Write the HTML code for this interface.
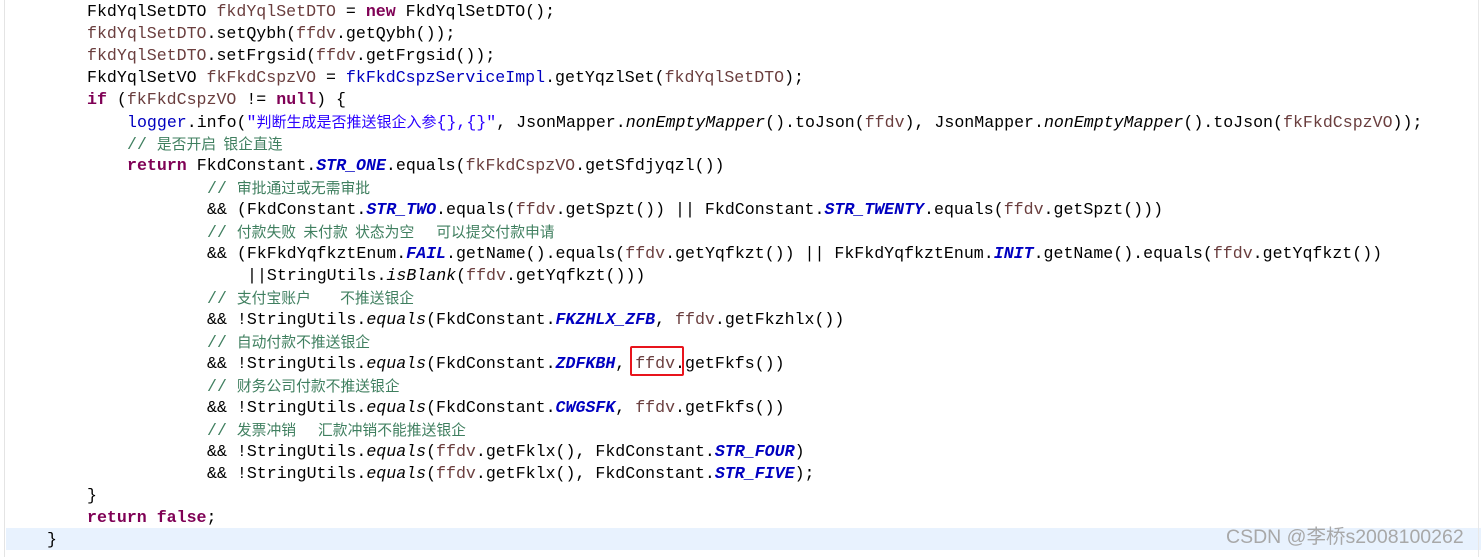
<!DOCTYPE html>
<html><head><meta charset="utf-8"><style>
html,body{margin:0;padding:0;background:#fff;width:1481px;height:557px;overflow:hidden;position:relative}
.l{position:absolute;height:22px;line-height:22px;white-space:pre;font-family:"Liberation Mono","Noto Sans CJK SC",monospace;font-size:16.6px;color:#000;letter-spacing:0}
.k{color:#7f0055;font-weight:bold}
.v{color:#6a3e3e}
.f{color:#0000c0;font-weight:bold;font-style:italic}
.s{color:#2a00ff}
.c{color:#3f7f5f}
.i{font-style:italic}
.cj{font-family:"Noto Sans CJK SC",sans-serif;font-size:14.8px;word-spacing:4px}
.sj{font-family:"Noto Sans CJK SC",sans-serif;font-size:15px}
</style></head><body>
<div style="position:absolute;left:4px;top:0;width:1px;height:557px;background:#e4e4e4"></div>
<div style="position:absolute;left:6px;top:528px;width:1475px;height:22px;background:#e8f2fe"></div>
<div style="position:absolute;left:1478px;top:0;width:1px;height:557px;background:#e8e8e8"></div>

<div class="l" style="left:87px;top:1px">FkdYqlSetDTO <span class="v">fkdYqlSetDTO</span> = <span class="k">new</span> FkdYqlSetDTO();</div>
<div class="l" style="left:87px;top:23px"><span class="v">fkdYqlSetDTO</span>.setQybh(<span class="v">ffdv</span>.getQybh());</div>
<div class="l" style="left:87px;top:45px"><span class="v">fkdYqlSetDTO</span>.setFrgsid(<span class="v">ffdv</span>.getFrgsid());</div>
<div class="l" style="left:87px;top:67px">FkdYqlSetVO <span class="v">fkFkdCspzVO</span> = <span style="color:#0000c0">fkFkdCspzServiceImpl</span>.getYqzlSet(<span class="v">fkdYqlSetDTO</span>);</div>
<div class="l" style="left:87px;top:89px"><span class="k">if</span> (<span class="v">fkFkdCspzVO</span> != <span class="k">null</span>) {</div>
<div class="l" style="left:127px;top:111px"><span style="color:#0000c0">logger</span>.info(<span class="s">"<span class="sj">判断生成是否推送银企入参</span>{},{}"</span>, JsonMapper.<span class="i">nonEmptyMapper</span>().toJson(<span class="v">ffdv</span>), JsonMapper.<span class="i">nonEmptyMapper</span>().toJson(<span class="v">fkFkdCspzVO</span>));</div>
<div class="l c" style="left:127px;top:133px">// <span class="cj">是否开启 银企直连</span></div>
<div class="l" style="left:127px;top:155px"><span class="k">return</span> FkdConstant.<span class="f">STR_ONE</span>.equals(<span class="v">fkFkdCspzVO</span>.getSfdjyqzl())</div>
<div class="l c" style="left:207px;top:177px">// <span class="cj">审批通过或无需审批</span></div>
<div class="l" style="left:207px;top:199px">&amp;&amp; (FkdConstant.<span class="f">STR_TWO</span>.equals(<span class="v">ffdv</span>.getSpzt()) || FkdConstant.<span class="f">STR_TWENTY</span>.equals(<span class="v">ffdv</span>.getSpzt()))</div>
<div class="l c" style="left:207px;top:221px">// <span class="cj">付款失败 未付款 状态为空   可以提交付款申请</span></div>
<div class="l" style="left:207px;top:243px">&amp;&amp; (FkFkdYqfkztEnum.<span class="f">FAIL</span>.getName().equals(<span class="v">ffdv</span>.getYqfkzt()) || FkFkdYqfkztEnum.<span class="f">INIT</span>.getName().equals(<span class="v">ffdv</span>.getYqfkzt())</div>
<div class="l" style="left:247px;top:265px">||StringUtils.<span class="i">isBlank</span>(<span class="v">ffdv</span>.getYqfkzt()))</div>
<div class="l c" style="left:207px;top:287px">// <span class="cj">支付宝账户    不推送银企</span></div>
<div class="l" style="left:207px;top:309px">&amp;&amp; !StringUtils.<span class="i">equals</span>(FkdConstant.<span class="f">FKZHLX_ZFB</span>, <span class="v">ffdv</span>.getFkzhlx())</div>
<div class="l c" style="left:207px;top:331px">// <span class="cj">自动付款不推送银企</span></div>
<div class="l" style="left:207px;top:353px">&amp;&amp; !StringUtils.<span class="i">equals</span>(FkdConstant.<span class="f">ZDFKBH</span>, <span class="v">ffdv</span>.getFkfs())</div>
<div style="position:absolute;left:630px;top:346px;width:54px;height:30px;border:2px solid #e8141c;border-radius:2px;box-sizing:border-box"></div>
<div class="l c" style="left:207px;top:375px">// <span class="cj">财务公司付款不推送银企</span></div>
<div class="l" style="left:207px;top:397px">&amp;&amp; !StringUtils.<span class="i">equals</span>(FkdConstant.<span class="f">CWGSFK</span>, <span class="v">ffdv</span>.getFkfs())</div>
<div class="l c" style="left:207px;top:419px">// <span class="cj">发票冲销   汇款冲销不能推送银企</span></div>
<div class="l" style="left:207px;top:441px">&amp;&amp; !StringUtils.<span class="i">equals</span>(<span class="v">ffdv</span>.getFklx(), FkdConstant.<span class="f">STR_FOUR</span>)</div>
<div class="l" style="left:207px;top:463px">&amp;&amp; !StringUtils.<span class="i">equals</span>(<span class="v">ffdv</span>.getFklx(), FkdConstant.<span class="f">STR_FIVE</span>);</div>
<div class="l" style="left:87px;top:485px">}</div>
<div class="l" style="left:87px;top:507px"><span class="k">return</span> <span class="k">false</span>;</div>
<div class="l" style="left:47px;top:529px">}</div>
<div style="position:absolute;left:1226px;top:526px;font-family:'Liberation Sans','Noto Sans CJK SC',sans-serif;font-size:19.5px;color:#a8a8a8;line-height:22px;white-space:pre">CSDN @李桥s2008100262</div>
</body></html>
